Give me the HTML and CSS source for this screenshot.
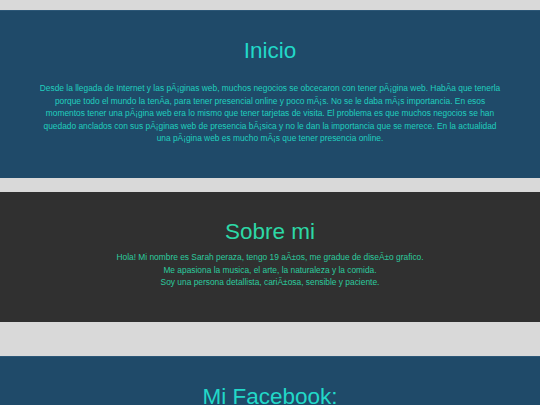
FILE: index.html
```html
<!DOCTYPE html>
<html lang="es">
<head>
<meta charset="utf-8">
<title>Sarah Peraza</title>
<link rel="stylesheet" href="styles.css">
</head>
<body>
<section class="panel panel-blue panel-first">
  <h1 class="panel-title">Inicio</h1>
  <p class="panel-text">Desde la llegada de Internet y las pÃ¡ginas web, muchos negocios se obcecaron con tener pÃ¡gina web. HabÃa que tenerla porque todo el mundo la tenÃa, para tener presencial online y poco mÃ¡s. No se le daba mÃ¡s importancia. En esos momentos tener una pÃ¡gina web era lo mismo que tener tarjetas de visita. El problema es que muchos negocios se han quedado anclados con sus pÃ¡ginas web de presencia bÃ¡sica y no le dan la importancia que se merece. En la actualidad una pÃ¡gina web es mucho mÃ¡s que tener presencia online.</p>
</section>
<section class="panel panel-dark">
  <h1 class="panel-title">Sobre mi</h1>
  <p class="panel-text panel-text-tight">Hola! Mi nombre es Sarah peraza, tengo 19 aÃ±os, me gradue de diseÃ±o grafico.<br>Me apasiona la musica, el arte, la naturaleza y la comida.<br>Soy una persona detallista, cariÃ±osa, sensible y paciente.</p>
</section>
<section class="panel panel-blue panel-last">
  <h1 class="panel-title">Mi Facebook:</h1>
</section>
</body>
</html>
```
FILE: styles.css
```css
html, body {
  margin: 0;
  padding: 0;
}
body {
  background: #d9d9d9;
  padding-top: 10px;
  font-family: "Liberation Sans", Arial, sans-serif;
}
.panel {
  padding: 26px 36px 33px;
  text-align: center;
}
.panel-blue {
  background: #1f4a69;
  border-top: 1px solid #2c5777;
  color: #1fcfbe;
}
.panel-dark {
  background: #303030;
  color: #2ccb9e;
  margin-top: 14px;
  padding-top: 26px;
  padding-bottom: 33.5px;
}
.panel-last {
  margin-top: 34px;
  padding-top: 26px;
  height: 200px;
}
.panel-title {
  margin: 0;
  font-family: "Liberation Sans", Arial, sans-serif;
  font-weight: 400;
  font-size: 22.5px;
  line-height: 28px;
}
.panel-blue .panel-title {
  color: #22d8c8;
}
.panel-dark .panel-title {
  color: #2dd8a6;
}
.panel-text {
  margin: 17px 0 0;
  font-size: 8.4px;
  line-height: 12.6px;
}
.panel-text-tight {
  margin-top: 5px;
}
```
